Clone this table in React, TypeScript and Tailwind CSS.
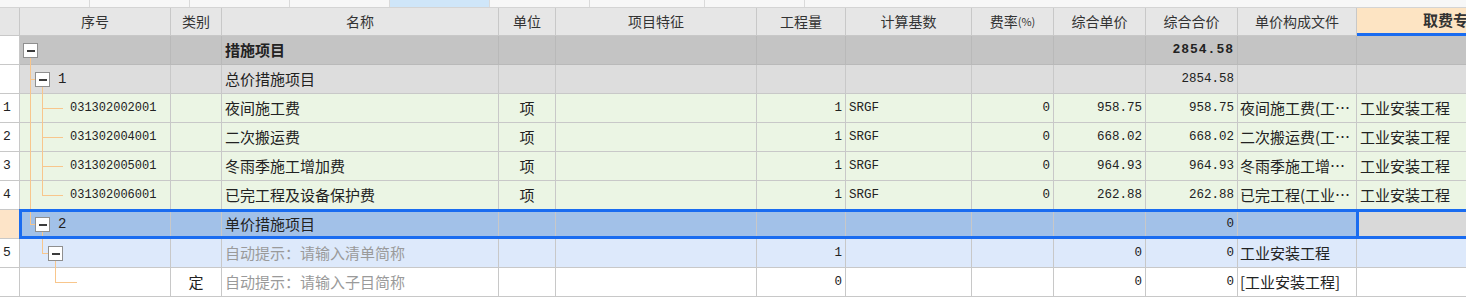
import React from "react";

// 分部分项 / 措施项目 grid: fixed column widths, tree column, selected row outline
const GRID =
  "grid grid-cols-[20px_151px_51px_277px_57px_201px_89px_126px_82px_92px_92px_119px_192px]";

const CJK = "font-['Noto_Sans_CJK_SC',sans-serif]";
const MONO = "font-['Liberation_Mono',monospace]";

type Seg = { x: number; y1: number; y2: number } | { y: number; x1: number; x2: number };
type Kind = "root" | "group" | "item" | "current" | "bill" | "sub";

type Row = {
  num?: string;
  kind: Kind;
  tree: Seg[];
  boxes: number[];
  label?: string;
  labelX?: number;
  cat?: string;
  name: string;
  hint?: boolean;
  unit?: string;
  qty?: string;
  base?: string;
  rate?: string;
  price?: string;
  total?: string;
  file?: string;
  major?: string;
};

const BG: Record<Kind, string> = {
  root: "bg-[#c4c4c4]",
  group: "bg-[#dddddd]",
  item: "bg-[#ebf5e4]",
  current: "bg-[#a2c1e8]",
  bill: "bg-[#dde9fb]",
  sub: "bg-white",
};

// trunk of the item branch (x = 22), root trunk (x = 10)
const rootTrunk: Seg = { x: 10, y1: 0, y2: 29 };
const itemTrunk: Seg = { x: 22, y1: 0, y2: 29 };

const rows: Row[] = [
  {
    kind: "root",
    boxes: [3],
    tree: [{ x: 10, y1: 22, y2: 29 }],
    name: "措施项目",
    total: "2854.58",
  },
  {
    kind: "group",
    boxes: [15],
    tree: [rootTrunk, { y: 14, x1: 10, x2: 15 }, { x: 22, y1: 22, y2: 29 }],
    label: "1",
    labelX: 38,
    name: "总价措施项目",
    total: "2854.58",
  },
  {
    num: "1",
    kind: "item",
    boxes: [],
    tree: [rootTrunk, itemTrunk, { y: 14, x1: 22, x2: 43 }],
    label: "031302002001",
    labelX: 50,
    name: "夜间施工费",
    unit: "项",
    qty: "1",
    base: "SRGF",
    rate: "0",
    price: "958.75",
    total: "958.75",
    file: "夜间施工费(工…",
    major: "工业安装工程",
  },
  {
    num: "2",
    kind: "item",
    boxes: [],
    tree: [rootTrunk, itemTrunk, { y: 14, x1: 22, x2: 43 }],
    label: "031302004001",
    labelX: 50,
    name: "二次搬运费",
    unit: "项",
    qty: "1",
    base: "SRGF",
    rate: "0",
    price: "668.02",
    total: "668.02",
    file: "二次搬运费(工…",
    major: "工业安装工程",
  },
  {
    num: "3",
    kind: "item",
    boxes: [],
    tree: [rootTrunk, itemTrunk, { y: 14, x1: 22, x2: 43 }],
    label: "031302005001",
    labelX: 50,
    name: "冬雨季施工增加费",
    unit: "项",
    qty: "1",
    base: "SRGF",
    rate: "0",
    price: "964.93",
    total: "964.93",
    file: "冬雨季施工增…",
    major: "工业安装工程",
  },
  {
    num: "4",
    kind: "item",
    boxes: [],
    tree: [rootTrunk, { x: 22, y1: 0, y2: 14 }, { y: 14, x1: 22, x2: 43 }],
    label: "031302006001",
    labelX: 50,
    name: "已完工程及设备保护费",
    unit: "项",
    qty: "1",
    base: "SRGF",
    rate: "0",
    price: "262.88",
    total: "262.88",
    file: "已完工程(工业…",
    major: "工业安装工程",
  },
  {
    kind: "current",
    boxes: [15],
    tree: [{ x: 10, y1: 0, y2: 14 }, { y: 14, x1: 10, x2: 15 }, { x: 22, y1: 22, y2: 29 }],
    label: "2",
    labelX: 38,
    name: "单价措施项目",
    total: "0",
  },
  {
    num: "5",
    kind: "bill",
    boxes: [28],
    tree: [{ x: 22, y1: 0, y2: 14 }, { y: 14, x1: 22, x2: 28 }, { x: 35, y1: 22, y2: 29 }],
    name: "自动提示：请输入清单简称",
    hint: true,
    qty: "1",
    price: "0",
    total: "0",
    file: "工业安装工程",
  },
  {
    kind: "sub",
    boxes: [],
    tree: [{ x: 35, y1: 0, y2: 14 }, { y: 14, x1: 35, x2: 57 }],
    cat: "定",
    name: "自动提示：请输入子目简称",
    hint: true,
    qty: "0",
    price: "0",
    total: "0",
    file: "[工业安装工程]",
  },
];

const tabs = [
  { w: "w-[90px]", on: false },
  { w: "w-[100px]", on: false },
  { w: "w-[100px]", on: false },
  { w: "w-[100px]", on: false },
  { w: "w-[100px]", on: true },
  { w: "w-[100px]", on: false },
  { w: "w-[115px]", on: false },
  { w: "w-[100px]", on: false },
];

function TreeLines({ segs }: { segs: Seg[] }) {
  return (
    <>
      {segs.map((s, i) =>
        "x" in s ? (
          <span
            key={i}
            className="absolute w-px bg-[#f8c68c]"
            style={{ left: s.x, top: s.y1, height: s.y2 - s.y1 }}
          />
        ) : (
          <span
            key={i}
            className="absolute h-px bg-[#f8c68c]"
            style={{ top: s.y, left: s.x1, width: s.x2 - s.x1 }}
          />
        )
      )}
    </>
  );
}

function Toggle({ x }: { x: number }) {
  return (
    <span
      className="absolute top-[7px] flex h-[15px] w-[15px] items-center justify-center border border-[#8f8f8f] bg-white"
      style={{ left: x }}
    >
      <span className="h-[2px] w-[8px] bg-[#3c3c3c]" />
    </span>
  );
}

function Header() {
  const th =
    "flex h-full items-center justify-center border-r border-b border-[#c8c8c8] bg-[#e6e6e6] text-[14px] text-[#333]";
  const titles = ["序号", "类别", "名称", "单位", "项目特征", "工程量", "计算基数"];
  return (
    <div className={`${GRID} h-[28px] ${CJK}`}>
      <div className={th} />
      {titles.map((t) => (
        <div key={t} className={th}>
          {t}
        </div>
      ))}
      <div className={th}>
        费率<span className="text-[11px]">(%)</span>
      </div>
      <div className={th}>综合单价</div>
      <div className={th}>综合合价</div>
      <div className={th}>单价构成文件</div>
      <div className="flex h-full items-center justify-center overflow-hidden whitespace-nowrap border-b-[3px] border-[#1a6cf0] bg-[#fde4c3] text-[15px] font-bold text-[#333]">
        取费专业
      </div>
    </div>
  );
}

function DataRow({ row }: { row: Row }) {
  const bg = BG[row.kind];
  const line = row.kind === "root" ? "border-[#b9b9b9]" : "border-[#c8c8c8]";
  const cell = `flex h-full items-center overflow-hidden whitespace-nowrap border-r border-b ${line} ${bg}`;
  const num = `${cell} justify-end pr-[3px] ${MONO} text-[12.5px] text-[#222]`;
  const bold = row.kind === "root" ? "font-bold tracking-[1px] text-[13px]" : "text-[12.5px]";
  const majorBg = row.kind === "current" ? "bg-[#d9d9d9]" : bg;

  return (
    <div className={`${GRID} relative h-[29px] text-[#222]`}>
      <div
        className={`flex h-full items-center border-r border-b border-[#c8c8c8] pl-[3px] ${MONO} text-[13px] ${
          row.kind === "current" ? "bg-[#fde4c8]" : "bg-white"
        }`}
      >
        {row.num}
      </div>

      {/* 序号: tree connectors, toggles and code */}
      <div className={`relative h-full border-r border-b ${line} ${bg}`}>
        <TreeLines segs={row.tree} />
        {row.boxes.map((x) => (
          <Toggle key={x} x={x} />
        ))}
        {row.label && (
          <span
            className={`absolute top-0 flex h-[28px] items-center ${MONO} ${
              row.label.length > 2 ? "text-[12px]" : "text-[14px]"
            } text-[#222]`}
            style={{ left: row.labelX }}
          >
            {row.label}
          </span>
        )}
      </div>

      <div className={`${cell} justify-center ${CJK} text-[15px]`}>{row.cat}</div>
      <div
        className={`${cell} pl-[3px] ${CJK} text-[15px] ${row.hint ? "text-[#9a9a9a]" : ""} ${
          row.kind === "root" ? "font-bold" : ""
        }`}
      >
        {row.name}
      </div>
      <div className={`${cell} justify-center ${CJK} text-[15px]`}>{row.unit}</div>
      <div className={cell} />
      <div className={num}>{row.qty}</div>
      <div className={`${cell} pl-[3px] ${MONO} text-[12.5px]`}>{row.base}</div>
      <div className={num}>{row.rate}</div>
      <div className={num}>{row.price}</div>
      <div className={`${cell} justify-end pr-[3px] ${MONO} ${bold}`}>{row.total}</div>
      <div className={`${cell} pl-[2px] ${CJK} text-[15px]`}>{row.file}</div>
      <div
        className={`flex h-full items-center overflow-hidden whitespace-nowrap border-b ${line} ${majorBg} pl-[3px] ${CJK} text-[15px]`}
      >
        {row.major}
      </div>

      {row.kind === "current" && (
        <>
          <div className="pointer-events-none absolute left-[19px] top-[-1px] h-[30px] w-[1600px] border-[3px] border-[#1a6cf0]" />
          <div className="pointer-events-none absolute left-[1356px] top-[-1px] h-[30px] w-[200px] border-[3px] border-[#1a6cf0]" />
        </>
      )}
    </div>
  );
}

export default function App() {
  return (
    <div className="h-[297px] w-[1466px] overflow-hidden bg-white">
      {/* tab strip above the grid */}
      <div className="flex h-[8px] border-b border-[#d4d4d4] bg-[#f7f7f7]">
        {tabs.map((t, i) => (
          <div
            key={i}
            className={`${t.w} h-full border-r border-[#dadada] ${t.on ? "bg-[#cfe6f9]" : ""}`}
          />
        ))}
      </div>

      <div className="w-[1549px]">
        <Header />
        {rows.map((r, i) => (
          <DataRow key={i} row={r} />
        ))}
      </div>
    </div>
  );
}
